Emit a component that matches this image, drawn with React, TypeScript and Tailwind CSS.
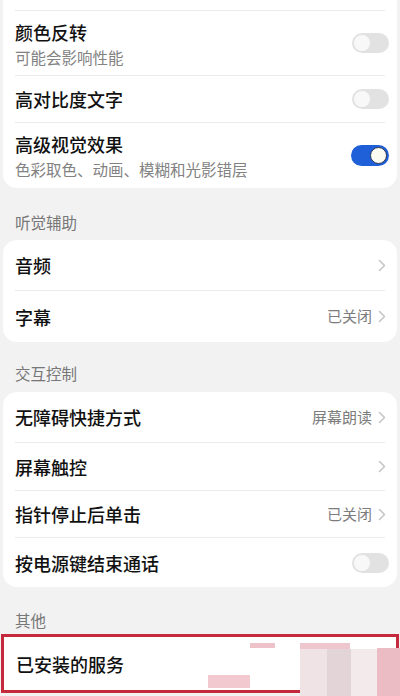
import React from "react";

const font = { fontFamily: '"Noto Sans CJK SC", "Noto Sans", sans-serif' };

function Toggle({ on }: { on?: boolean }) {
  if (on) {
    return (
      <div className="w-[38px] h-[21px] rounded-full bg-[#1f5fd8] flex items-center justify-end pr-[2px]">
        <div className="w-[17px] h-[17px] rounded-full bg-[#fbfbf2] border border-[#2a3650]" />
      </div>
    );
  }
  return (
    <div className="w-[37px] h-[20px] rounded-full bg-[#e2e2e2] flex items-center pl-[2px]">
      <div className="w-[16px] h-[16px] rounded-full bg-[#f8f8f8]" />
    </div>
  );
}

function Chevron() {
  return (
    <svg width="8" height="13" viewBox="0 0 8 13" className="ml-[6px]">
      <path d="M1.5 1.5 L6.5 6.5 L1.5 11.5" fill="none" stroke="#c4c4c4" strokeWidth="1.5" strokeLinecap="round" strokeLinejoin="round" />
    </svg>
  );
}

function Sep() {
  return <div className="mx-[12px] h-px bg-[#ebebeb]" />;
}

function Row({
  title,
  sub,
  value,
  right,
  h,
}: {
  title: string;
  sub?: string;
  value?: string;
  right: "toggle" | "toggleOn" | "chevron";
  h: string;
}) {
  return (
    <div className={`flex items-center pl-[12px] ${right === "chevron" ? "pr-[11px]" : "pr-[8px]"} ${h}`}>
      <div className="flex-1 flex flex-col">
        <div className="text-[18px] leading-[24px] text-[#111111] font-medium">{title}</div>
        {sub && <div className="text-[15.5px] leading-[20px] text-[#828282] mt-[3px]">{sub}</div>}
      </div>
      {right === "toggle" && <Toggle />}
      {right === "toggleOn" && <Toggle on />}
      {right === "chevron" && (
        <div className="flex items-center">
          {value && <span className="text-[15px] text-[#7c7c7c]">{value}</span>}
          <Chevron />
        </div>
      )}
    </div>
  );
}

function Header({ text, h }: { text: string; h: string }) {
  return (
    <div className={`flex items-end pl-[15px] ${h}`}>
      <span className="text-[15.5px] leading-[20px] text-[#777777]">{text}</span>
    </div>
  );
}

export default function App() {
  return (
    <div className="w-[400px] h-[696px] overflow-hidden bg-[#f2f2f2] relative" style={font}>
      {/* Card 1 (continues from above) */}
      <div className="mx-[3px] bg-white rounded-b-[14px]">
        <div className="h-[10px]" />
        <Sep />
        <Row title="颜色反转" sub="可能会影响性能" right="toggle" h="h-[64px]" />
        <Sep />
        <Row title="高对比度文字" right="toggle" h="h-[46px]" />
        <Sep />
        <Row title="高级视觉效果" sub="色彩取色、动画、模糊和光影错层" right="toggleOn" h="h-[65px]" />
      </div>

      <Header text="听觉辅助" h="h-[44px]" />

      <div className="mx-[3px] bg-white rounded-[14px] mt-[8px]">
        <Row title="音频" right="chevron" h="h-[50px]" />
        <Sep />
        <Row title="字幕" value="已关闭" right="chevron" h="h-[51px]" />
      </div>

      <Header text="交互控制" h="h-[41px]" />

      <div className="mx-[3px] bg-white rounded-[14px] mt-[9px]">
        <Row title="无障碍快捷方式" value="屏幕朗读" right="chevron" h="h-[50px]" />
        <Sep />
        <Row title="屏幕触控" right="chevron" h="h-[47px]" />
        <Sep />
        <Row title="指针停止后单击" value="已关闭" right="chevron" h="h-[46px]" />
        <Sep />
        <Row title="按电源键结束通话" right="toggle" h="h-[49px]" />
      </div>

      <Header text="其他" h="h-[43px]" />

      <div className="mx-[1px] mt-[4px] bg-white border-[3px] border-[#c52a3c] h-[59px] flex items-center pl-[12px]">
        <span className="text-[18px] leading-[24px] text-[#111111] font-medium">已安装的服务</span>
      </div>

      {/* watermark blocks over the bottom */}
      <div className="absolute left-[250px] top-[643px] w-[25px] h-[5px] bg-[#e8b4bc] opacity-80" />
      <div className="absolute left-[300px] top-[643px] w-[50px] h-[6px] bg-[#eab8c0] opacity-80" />
      <div className="absolute left-[300px] top-[649px] w-[27px] h-[47px] bg-[#f0e3e5]" />
      <div className="absolute left-[327px] top-[649px] w-[24px] h-[47px] bg-[#e3d4d7]" />
      <div className="absolute left-[351px] top-[649px] w-[26px] h-[47px] bg-[#f3eaeb]" />
      <div className="absolute left-[377px] top-[648px] w-[23px] h-[48px] bg-[#ebbcc3]" />
      <div className="absolute left-[208px] top-[675px] w-[42px] h-[13px] bg-[#f1c9cf]" />
    </div>
  );
}
